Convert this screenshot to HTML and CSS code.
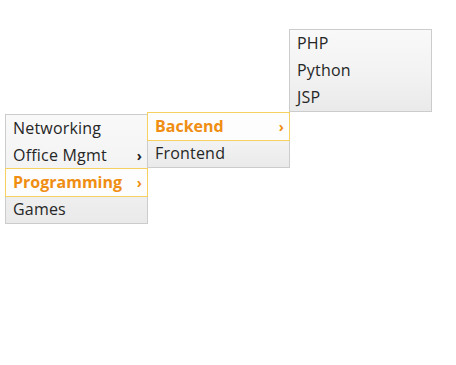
FILE: index.html
```html
<!DOCTYPE html>
<html>
<head>
<meta charset="utf-8">
<link rel="stylesheet" href="styles.css">
</head>
<body>
<nav class="nav">
  <ul class="menu">
    <li class="item">Networking</li>
    <li class="item has-sub"><span class="label">Office Mgmt</span><span class="arrow">›</span></li>
    <li class="item has-sub active"><span class="label">Programming</span><span class="arrow">›</span>
      <ul class="menu sub">
        <li class="item has-sub active"><span class="label">Backend</span><span class="arrow">›</span>
          <ul class="menu sub">
            <li class="item">PHP</li>
            <li class="item">Python</li>
            <li class="item">JSP</li>
          </ul>
        </li>
        <li class="item">Frontend</li>
      </ul>
    </li>
    <li class="item">Games</li>
  </ul>
</nav>
</body>
</html>
```
FILE: styles.css
```css
html, body {
  margin: 0;
  padding: 0;
  background: #ffffff;
}
body {
  font-family: "Open Sans", "DejaVu Sans", sans-serif;
  font-size: 16px;
  color: #262626;
}
.nav {
  padding: 114px 0 0 5px;
}
.menu {
  list-style: none;
  margin: 0;
  padding: 0;
  width: 141px;
  border: 1px solid #cccccc;
  background: linear-gradient(to bottom, #f9f9f9 0%, #f3f3f3 50%, #eaeaea 100%);
}
.item {
  position: relative;
  height: 27px;
  line-height: 27px;
  padding: 0 5px 0 7px;
  display: flex;
  justify-content: space-between;
  align-items: center;
  white-space: nowrap;
  letter-spacing: 0.2px;
}
.item.active {
  background: #fdfdfd;
  box-shadow: 0 0 0 1px #f6d061;
  z-index: 2;
}
.item.active > .label,
.item.active > .arrow {
  color: #ef8e12;
  font-weight: bold;
  letter-spacing: 0;
}
.arrow {
  font-size: 14px;
  font-weight: bold;
  color: #222;
}
.sub {
  position: absolute;
  left: 100%;
  bottom: calc(100% + 1px);
  z-index: 3;
  font-weight: normal;
}
```
